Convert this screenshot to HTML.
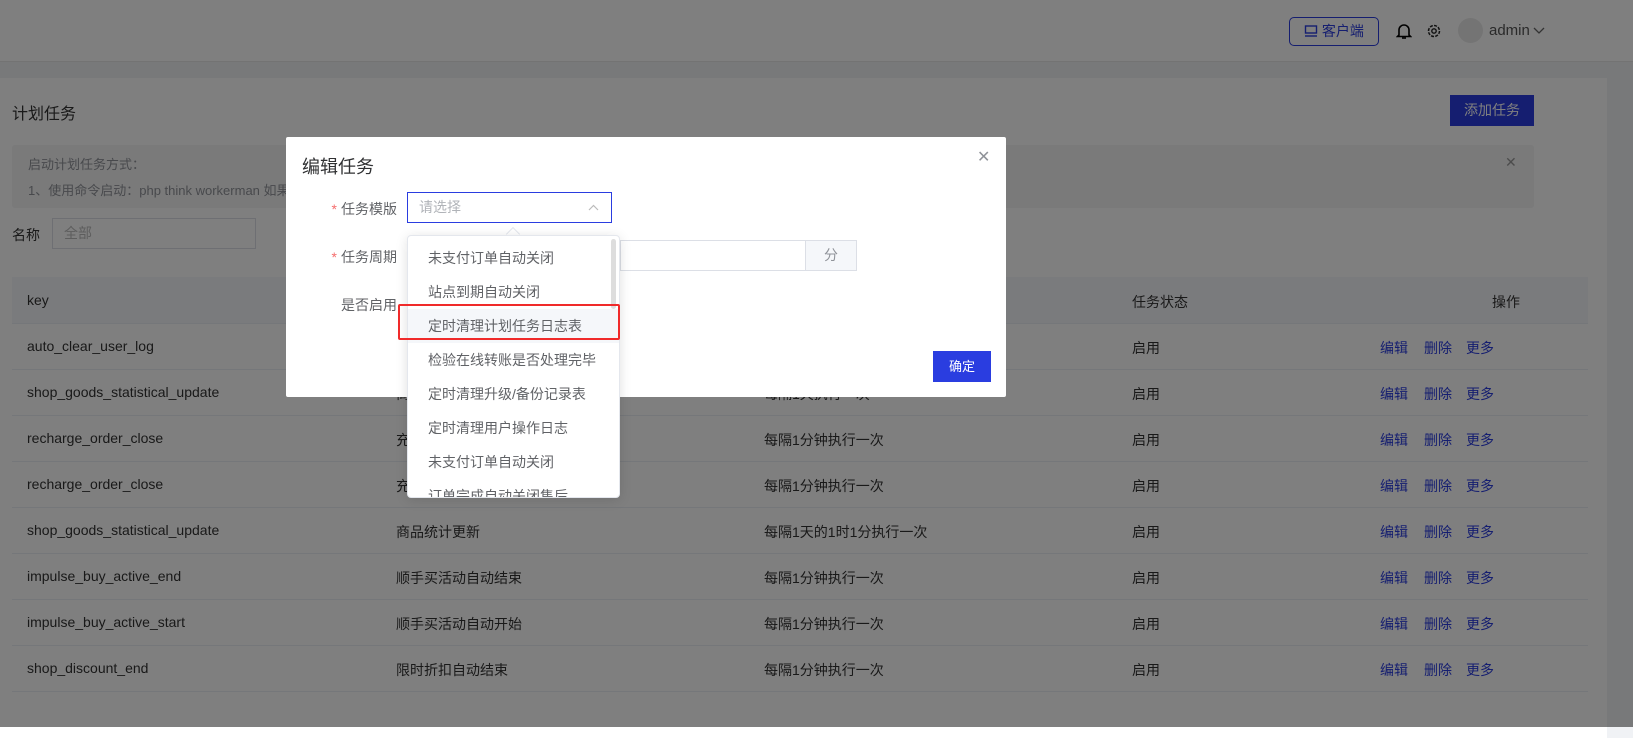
<!DOCTYPE html>
<html><head><meta charset="utf-8"><style>
*{box-sizing:border-box;margin:0;padding:0}
body{width:1633px;height:727px;overflow:hidden;position:relative;background:#f0f2f5;font-family:"Liberation Sans","Noto Sans CJK SC",sans-serif;font-size:14px;color:#333}
.hdr{position:absolute;left:0;top:0;width:1633px;height:62px;background:#fff;border-bottom:1px solid #e6e6e6}
.card{position:absolute;left:0;top:78px;width:1607px;height:660px;background:#fff}
.abs{position:absolute;white-space:nowrap}
.row{position:absolute;left:12px;width:1576px;height:46px;border-bottom:1px solid #ebeef5}
.row span{position:absolute;top:14px}
.lnk{color:#2a3de0}
.mask{position:absolute;left:0;top:0;width:1633px;height:727px;background:rgba(0,0,0,.5)}
.modal{position:absolute;left:286px;top:137px;width:720px;height:260px;background:#fff;border-radius:2px}
.lbl{position:absolute;color:#606266;font-size:14px;text-align:right;width:90px}
.lbl i{color:#f56c6c;font-style:normal;margin-right:4px}
.dd{position:absolute;left:407px;top:235px;width:213px;height:263px;background:#fff;border:1px solid #e4e7ed;border-radius:4px;box-shadow:0 2px 12px rgba(0,0,0,.12);overflow:hidden}
.dd div{height:34px;line-height:34px;padding-left:20px;color:#606266;font-size:14px}
</style></head><body>
<div class="hdr">
 <div class="abs" style="left:1289px;top:17px;width:90px;height:29px;border:1px solid #2a3de0;border-radius:5px;color:#2a3de0;font-size:14px;line-height:27px;padding-left:14px">
  <svg width="14" height="12" viewBox="0 0 14 12" style="vertical-align:-1px"><rect x="1.5" y="1" width="11" height="7" fill="none" stroke="#2a3de0" stroke-width="1.4"/><path d="M1 11h12" stroke="#2a3de0" stroke-width="1.4"/></svg> 客户端</div>
 <svg class="abs" style="left:1396px;top:22px" width="16" height="18" viewBox="0 0 16 18"><path d="M3 13V8a5 5 0 0110 0v5l1.5 1.5h-13z" fill="none" stroke="#000" stroke-width="1.6"/><path d="M6 16h4" stroke="#000" stroke-width="1.6"/></svg>
 <svg class="abs" style="left:1426px;top:23px" width="16" height="16" viewBox="0 0 16 16"><circle cx="8" cy="8" r="5.5" fill="none" stroke="#222" stroke-width="1.5" stroke-dasharray="3 1.3"/><circle cx="8" cy="8" r="2.2" fill="none" stroke="#222" stroke-width="1.4"/></svg>
 <div class="abs" style="left:1458px;top:18px;width:25px;height:25px;border-radius:50%;background:#e8e8e8"></div>
 <div class="abs" style="left:1489px;top:22px;font-size:15px;color:#555">admin</div>
 <svg class="abs" style="left:1533px;top:27px" width="12" height="8" viewBox="0 0 12 8"><path d="M1 1l5 5 5-5" fill="none" stroke="#666" stroke-width="1.3"/></svg>
</div>
<div class="card">
 <div class="abs" style="left:12px;top:22px;font-size:16px;color:#333">计划任务</div>
 <div class="abs" style="left:1450px;top:17px;width:84px;height:31px;background:#2a3de0;color:#fff;font-size:14px;line-height:31px;text-align:center">添加任务</div>
 <div class="abs" style="left:12px;top:67px;width:1522px;height:63px;background:#f4f4f5;border-radius:3px"></div>
 <div class="abs" style="left:28px;top:76px;font-size:13px;color:#909399">启动计划任务方式：</div>
 <div class="abs" style="left:28px;top:102px;font-size:13px;color:#909399">1、使用命令启动：php think workerman 如果...</div>
 <div class="abs" style="left:1505px;top:76px;color:#999;font-size:14px">✕</div>
 <div class="abs" style="left:12px;top:147px;font-size:14px;color:#333">名称</div>
 <div class="abs" style="left:52px;top:140px;width:204px;height:31px;border:1px solid #dcdfe6;color:#bbb;padding-left:11px;line-height:29px">全部</div>
 <div class="abs" style="left:12px;top:199px;width:1576px;height:47px;background:#f5f7fa;border-bottom:1px solid #ebeef5"></div>
 <div class="abs" style="left:27px;top:214px;color:#333">key</div>
 <div class="abs" style="left:1132px;top:214px;color:#333">任务状态</div>
 <div class="abs" style="left:1492px;top:214px;color:#333">操作</div>
 <div class="row" style="top:246px"><span style="left:15px">auto_clear_user_log</span><span style="left:384px">定时清理用户日志</span><span style="left:752px">每隔1天执行一次</span><span style="left:1120px">启用</span><span class="lnk" style="left:1368px">编辑</span><span class="lnk" style="left:1412px">删除</span><span class="lnk" style="left:1454px">更多</span></div>
 <div class="row" style="top:292px"><span style="left:15px">shop_goods_statistical_update</span><span style="left:384px">商品统计更新</span><span style="left:752px">每隔1天执行一次</span><span style="left:1120px">启用</span><span class="lnk" style="left:1368px">编辑</span><span class="lnk" style="left:1412px">删除</span><span class="lnk" style="left:1454px">更多</span></div>
 <div class="row" style="top:338px"><span style="left:15px">recharge_order_close</span><span style="left:384px">充值订单关闭</span><span style="left:752px">每隔1分钟执行一次</span><span style="left:1120px">启用</span><span class="lnk" style="left:1368px">编辑</span><span class="lnk" style="left:1412px">删除</span><span class="lnk" style="left:1454px">更多</span></div>
 <div class="row" style="top:384px"><span style="left:15px">recharge_order_close</span><span style="left:384px">充值订单关闭</span><span style="left:752px">每隔1分钟执行一次</span><span style="left:1120px">启用</span><span class="lnk" style="left:1368px">编辑</span><span class="lnk" style="left:1412px">删除</span><span class="lnk" style="left:1454px">更多</span></div>
 <div class="row" style="top:430px"><span style="left:15px">shop_goods_statistical_update</span><span style="left:384px">商品统计更新</span><span style="left:752px">每隔1天的1时1分执行一次</span><span style="left:1120px">启用</span><span class="lnk" style="left:1368px">编辑</span><span class="lnk" style="left:1412px">删除</span><span class="lnk" style="left:1454px">更多</span></div>
 <div class="row" style="top:476px"><span style="left:15px">impulse_buy_active_end</span><span style="left:384px">顺手买活动自动结束</span><span style="left:752px">每隔1分钟执行一次</span><span style="left:1120px">启用</span><span class="lnk" style="left:1368px">编辑</span><span class="lnk" style="left:1412px">删除</span><span class="lnk" style="left:1454px">更多</span></div>
 <div class="row" style="top:522px"><span style="left:15px">impulse_buy_active_start</span><span style="left:384px">顺手买活动自动开始</span><span style="left:752px">每隔1分钟执行一次</span><span style="left:1120px">启用</span><span class="lnk" style="left:1368px">编辑</span><span class="lnk" style="left:1412px">删除</span><span class="lnk" style="left:1454px">更多</span></div>
 <div class="row" style="top:568px"><span style="left:15px">shop_discount_end</span><span style="left:384px">限时折扣自动结束</span><span style="left:752px">每隔1分钟执行一次</span><span style="left:1120px">启用</span><span class="lnk" style="left:1368px">编辑</span><span class="lnk" style="left:1412px">删除</span><span class="lnk" style="left:1454px">更多</span></div>
</div>
<div class="mask"></div>
<div class="modal">
 <div class="abs" style="left:16px;top:16px;font-size:18px;color:#303133">编辑任务</div>
 <div class="abs" style="left:691px;top:10px;color:#909399;font-size:16px">✕</div>
 <div class="lbl" style="left:21px;top:62px"><i>*</i>任务模版</div>
 <div class="lbl" style="left:21px;top:110px"><i>*</i>任务周期</div>
 <div class="lbl" style="left:21px;top:158px">是否启用</div>
 <div class="abs" style="left:121px;top:55px;width:205px;height:31px;border:1px solid #2a3de0;color:#b0b3b8;padding-left:11px;line-height:29px">请选择
  <svg style="position:absolute;right:12px;top:11px" width="11" height="7" viewBox="0 0 11 7"><path d="M1 6l4.5-4.5L10 6" fill="none" stroke="#bbb" stroke-width="1.2"/></svg></div>
 <div class="abs" style="left:334px;top:103px;width:185px;height:31px;border:1px solid #dcdfe6;border-right:none"></div>
 <div class="abs" style="left:519px;top:103px;width:52px;height:31px;border:1px solid #dcdfe6;background:#f5f7fa;color:#909399;text-align:center;line-height:29px">分</div>
 <div class="abs" style="left:647px;top:214px;width:58px;height:31px;background:#2a3de0;color:#fff;font-size:13px;line-height:31px;text-align:center">确定</div>
</div>
<div class="abs" style="left:508px;top:229px;width:10px;height:10px;background:#fff;transform:rotate(45deg);border-left:1px solid #e4e7ed;border-top:1px solid #e4e7ed"></div>
<div class="dd">
 <div style="margin-top:5px">未支付订单自动关闭</div>
 <div>站点到期自动关闭</div>
 <div style="background:#f5f7fa">定时清理计划任务日志表</div>
 <div>检验在线转账是否处理完毕</div>
 <div>定时清理升级/备份记录表</div>
 <div>定时清理用户操作日志</div>
 <div>未支付订单自动关闭</div>
 <div>订单完成自动关闭售后</div>
 <span style="position:absolute;right:3px;top:3px;width:5px;height:70px;background:#ddd;border-radius:3px"></span>
</div>
<div class="abs" style="left:398px;top:304px;width:222px;height:36px;border:2px solid #f02a2a;border-radius:2px"></div>
</body></html>
